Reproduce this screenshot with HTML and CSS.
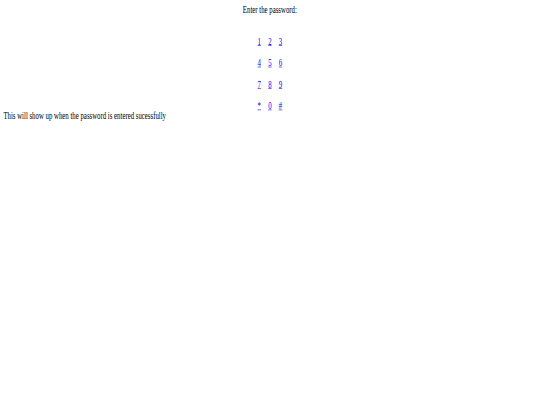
FILE: index.html
```html
<!DOCTYPE html>
<html>
<head>
<meta charset="utf-8">
<title>Password</title>
<link rel="stylesheet" href="styles.css">
</head>
<body>
<div class="frame">
  <div class="page">
    <div class="prompt">Enter the password:</div>
    <div class="keypad">
      <div class="row"><a href="#">1</a><a href="#">2</a><a href="#">3</a></div>
      <div class="row"><a href="#">4</a><a href="#">5</a><a href="#">6</a></div>
      <div class="row"><a href="#">7</a><a href="#">8</a><a href="#">9</a></div>
      <div class="row"><a href="#">*</a><a href="#">0</a><a href="#">#</a></div>
    </div>
    <div class="message">This will show up when the password is entered sucessfully</div>
  </div>
</div>
</body>
</html>
```

FILE: styles.css
```css
html, body {
  margin: 0;
  padding: 0;
  background: #ffffff;
  overflow: hidden;
}
.frame {
  width: 540px;
  height: 405px;
  overflow: hidden;
}
.page {
  width: 1270px;
  padding: 8px;
  box-sizing: border-box;
  font-family: "Liberation Serif", "Times New Roman", serif;
  font-size: 16px;
  line-height: 18.4px;
  color: #000000;
  transform: scale(0.425, 0.58);
  transform-origin: 0 0;
}
.prompt {
  text-align: center;
}
.keypad {
  margin-top: 36.8px;
  display: flex;
  flex-direction: column;
  gap: 18.4px;
}
.row {
  display: flex;
  justify-content: center;
  gap: 17px;
}
.row a {
  color: #0000ee;
  text-decoration: underline;
}
```
